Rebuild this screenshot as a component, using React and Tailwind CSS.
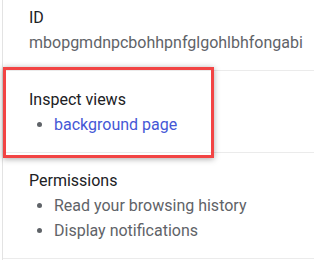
import React from 'react';

const Bullet = ({ children, className }) => (
  <li className="flex items-center h-[25px]">
    <span className="w-[17px] flex justify-center ml-[2px]">
      <span className="w-[5px] h-[5px] rounded-full bg-[#5f6368]" />
    </span>
    <span className={"ml-[6px] " + className}>{children}</span>
  </li>
);

const App = () => {
  return (
    <div
      className="relative w-[314px] h-[260px] overflow-hidden bg-white text-[16px] leading-[25px]"
      style={{ fontFamily: 'Roboto, "Liberation Sans", sans-serif' }}
    >
      <div className="ml-[2px] border-l border-[#e3e3e3] h-full">
        {/* ID */}
        <div className="pl-[26px] pt-[5px] pb-[15px] border-b border-[#ebebeb]">
          <div className="text-[#202124]">ID</div>
          <div className="text-[#5f6368]">mbopgmdnpcbohhpnfglgohlbhfongabi</div>
        </div>

        {/* Inspect views */}
        <div className="pl-[26px] pt-[16px] pb-[15px] border-b border-[#ebebeb]">
          <div className="text-[#202124]">Inspect views</div>
          <ul>
            <Bullet className="text-[#4557d6]">background page</Bullet>
          </ul>
        </div>

        {/* Permissions */}
        <div className="pl-[26px] pt-[15px] pb-[15px] border-b border-[#ebebeb]">
          <div className="text-[#202124]">Permissions</div>
          <ul className="text-[#5f6368]">
            <Bullet>Read your browsing history</Bullet>
            <Bullet>Display notifications</Bullet>
          </ul>
        </div>
      </div>

      {/* highlight box */}
      <div className="absolute left-[3px] top-[67px] w-[211px] h-[91px] border-[3px] border-[#f24444] shadow-[0_1px_6px_rgba(0,0,0,0.35)]" />
    </div>
  );
};

export default App;
